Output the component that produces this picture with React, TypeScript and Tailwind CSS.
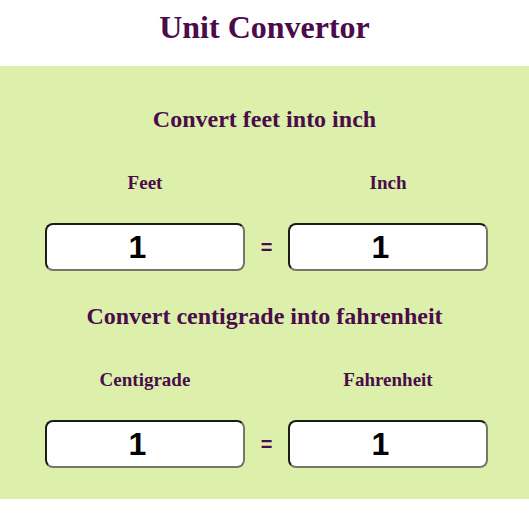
import { useState } from 'react';

function Field({ value, onChange }: { value: string; onChange: (v: string) => void }) {
  return (
    <input
      type="text"
      value={value}
      onChange={(e) => onChange(e.target.value)}
      className="w-[200px] h-[48px] rounded-[8px] border-2 border-t-[#1c1c14] border-l-[#1c1c14] border-b-[#76766a] border-r-[#76766a] bg-white pr-[15px] text-center text-[32px] font-bold text-black outline-none font-['Liberation_Sans',Arial,sans-serif]"
    />
  );
}

function Converter({
  title,
  fromLabel,
  toLabel,
  from,
  to,
}: {
  title: string;
  fromLabel: string;
  toLabel: string;
  from: [string, (v: string) => void];
  to: [string, (v: string) => void];
}) {
  return (
    <section className="flex flex-col items-center">
      <h2 className="text-[24px] font-bold leading-[28px] text-[#4a0c4a]">{title}</h2>
      <div className="mt-[38px] grid grid-cols-[200px_43px_200px] pl-[4px]">
        <label className="text-center text-[19px] font-bold leading-[24px] text-[#4a0c4a]">{fromLabel}</label>
        <div />
        <label className="text-center text-[19px] font-bold leading-[24px] text-[#4a0c4a]">{toLabel}</label>
        <div className="mt-[28px]">
          <Field value={from[0]} onChange={from[1]} />
        </div>
        <div className="mt-[28px] flex items-center justify-center text-[20px] font-bold text-[#4a0c4a] font-['Liberation_Sans',Arial,sans-serif]">
          =
        </div>
        <div className="mt-[28px]">
          <Field value={to[0]} onChange={to[1]} />
        </div>
      </div>
    </section>
  );
}

export default function App() {
  const [feet, setFeet] = useState('1');
  const [inch, setInch] = useState('1');
  const [cent, setCent] = useState('1');
  const [fahr, setFahr] = useState('1');

  return (
    <div className="min-h-screen bg-white font-['Liberation_Serif','Times_New_Roman',serif]">
      <h1 className="pt-[8px] pb-[20px] text-center text-[32px] font-bold leading-[38px] text-[#4a0c4a]">
        Unit Convertor
      </h1>
      <main className="flex flex-col gap-[31px] bg-[#dcf0ac] pt-[39px] pb-[31px]">
        <Converter
          title="Convert feet into inch"
          fromLabel="Feet"
          toLabel="Inch"
          from={[feet, setFeet]}
          to={[inch, setInch]}
        />
        <Converter
          title="Convert centigrade into fahrenheit"
          fromLabel="Centigrade"
          toLabel="Fahrenheit"
          from={[cent, setCent]}
          to={[fahr, setFahr]}
        />
      </main>
    </div>
  );
}
